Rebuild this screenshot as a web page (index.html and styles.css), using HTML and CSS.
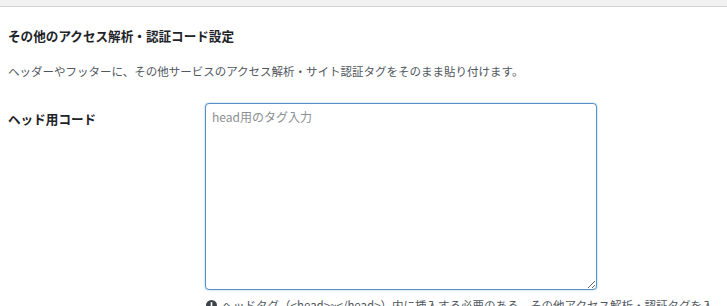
FILE: index.html
```html
<!DOCTYPE html>
<html lang="ja">
<head>
    <meta charset="UTF-8">
    <title>その他のアクセス解析・認証コード設定</title>
    <link rel="stylesheet" href="styles.css">
</head>
<body>
    <!-- 上部のバー -->
    <div class="topbar"></div>

    <div class="wrap">
        <h3 class="section-title">その他のアクセス解析・認証コード設定</h3>
        <p class="section-desc">ヘッダーやフッターに、その他サービスのアクセス解析・サイト認証タグをそのまま貼り付けます。</p>

        <div class="form-row">
            <label class="form-label" for="head-code">ヘッド用コード</label>
            <div class="form-field">
                <textarea id="head-code" class="code-input" placeholder="head用のタグ入力"></textarea>
                <p class="field-note">
                    <svg class="note-icon" viewBox="0 0 12 12" width="11" height="11"><circle cx="6" cy="6" r="6" fill="#3c434a"/><rect x="5.1" y="2.4" width="1.8" height="4.6" fill="#fff"/><rect x="5.1" y="8" width="1.8" height="1.8" fill="#fff"/></svg>
                    ヘッドタグ（&lt;head&gt;~&lt;/head&gt;）内に挿入する必要のある、その他アクセス解析・認証タグを入力してください。
                </p>
            </div>
        </div>
    </div>
</body>
</html>
```

FILE: styles.css
```css
body {
    margin: 0;
    background: #fff;
    color: #23282d;
    font-family: "Noto Sans CJK JP", "Noto Sans", sans-serif;
    overflow: hidden;
}
.topbar {
    height: 6px;
    background: #f1f1f1;
    border-bottom: 1px solid #d2d2d2;
}
.wrap {
    padding: 0 8px;
}
.section-title {
    margin: 20px 0 0;
    font-size: 12.6px;
    line-height: 18px;
    font-weight: bold;
    color: #1d2327;
}
.section-desc {
    margin: 17px 0 0;
    font-size: 11.5px;
    line-height: 18px;
    color: #50575e;
}
.form-row {
    display: grid;
    grid-template-columns: 197px 1fr;
    margin-top: 23px;
}
.form-label {
    padding-top: 7px;
    font-size: 12.6px;
    line-height: 18px;
    font-weight: bold;
    color: #1d2327;
}
.code-input {
    display: block;
    box-sizing: border-box;
    width: 392px;
    height: 187px;
    margin: 0;
    padding: 4px 6px;
    border: 1px solid #5b8fc7;
    border-radius: 4px;
    box-shadow: 0 0 2px rgba(30, 140, 190, 0.5);
    font-family: inherit;
    font-size: 12px;
    line-height: 18px;
    color: #2c3338;
    resize: vertical;
    outline: none;
}
.code-input::placeholder {
    color: #8c8f94;
}
.field-note {
    margin: 6px 0 0;
    padding-left: 1px;
    font-size: 11.5px;
    line-height: 18px;
    color: #50575e;
}
.note-icon {
    vertical-align: -1px;
    margin-right: 2px;
}
```
